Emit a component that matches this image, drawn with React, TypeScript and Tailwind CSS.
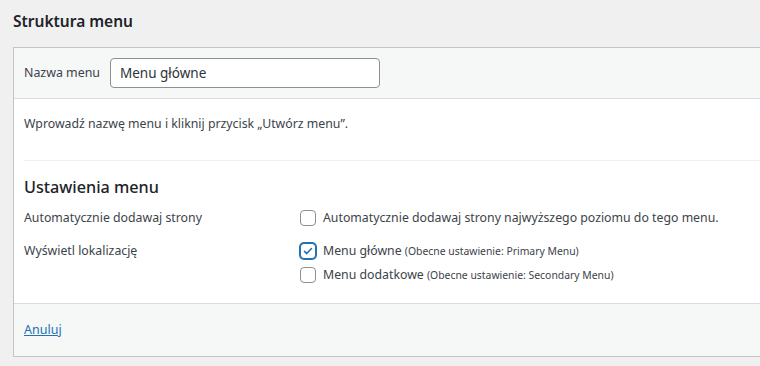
export default function App() {
  const font = { fontFamily: '"Noto Sans", "Open Sans", sans-serif' };
  return (
    <div className="h-[366px] w-[760px] overflow-hidden bg-[#f0f0f1] text-[#3c434a]" style={font}>
      <h2 className="pl-[13px] pt-[9px] text-[15.5px] font-semibold leading-[24px] text-[#1d2327]">
        Struktura menu
      </h2>
      <div className="ml-[13px] mt-[14px] w-[800px] border border-[#c3c4c7] bg-white">
        <div className="flex h-[51px] items-center gap-[10px] border-b border-[#dcdcde] bg-[#f6f7f7] pl-[10px]">
          <span className="text-[12.4px]">Nazwa menu</span>
          <input
            defaultValue="Menu główne"
            className="h-[30px] w-[270px] rounded-[4px] border border-[#8c8f94] bg-white px-[9px] text-[13.5px] text-[#2c3338] outline-none"
          />
        </div>
        <div className="px-[10px]">
          <p className="pb-[26px] pt-[15px] text-[12.3px] leading-[20px]">
            Wprowadź nazwę menu i kliknij przycisk „Utwórz menu”.
          </p>
          <div className="border-t border-[#f0f0f1] pt-[14px] pb-[19px]">
            <h3 className="text-[16.2px] font-medium leading-[24px] text-[#1d2327]">Ustawienia menu</h3>
            <div className="mt-[10px] grid grid-cols-[276px_1fr] gap-y-[12px] text-[12.3px] leading-[18px]">
              <div>Automatycznie dodawaj strony</div>
              <label className="flex items-center gap-[7px]">
                <Box />
                <span>Automatycznie dodawaj strony najwyższego poziomu do tego menu.</span>
              </label>
              <div className="pt-[3px]">Wyświetl lokalizację</div>
              <div className="flex flex-col gap-[6px] pt-[3px]">
                <label className="flex items-center gap-[7px]">
                  <Box checked />
                  <span>
                    Menu główne <span className="text-[10.4px]">(Obecne ustawienie: Primary Menu)</span>
                  </span>
                </label>
                <label className="flex items-center gap-[7px]">
                  <Box />
                  <span>
                    Menu dodatkowe <span className="text-[10.4px]">(Obecne ustawienie: Secondary Menu)</span>
                  </span>
                </label>
              </div>
            </div>
          </div>
        </div>
        <div className="flex h-[53px] items-center border-t border-[#dcdcde] bg-[#f6f7f7] pl-[10px]">
          <a href="#" className="text-[12.5px] text-[#2271b1] underline">
            Anuluj
          </a>
        </div>
      </div>
    </div>
  );
}

function Box({ checked = false }: { checked?: boolean }) {
  return (
    <span
      className={`flex h-[16px] w-[16px] shrink-0 items-center justify-center rounded-[4px] border bg-white ${
        checked ? "border-[#2271b1] shadow-[0_0_0_1px_#2271b1]" : "border-[#8c8f94]"
      }`}
    >
      {checked ? (
        <svg viewBox="0 0 20 20" className="h-[18px] w-[18px]">
          <path d="M5 10.5l3.2 3.2L15 6.5" fill="none" stroke="#2271b1" strokeWidth="2.2" strokeLinecap="round" strokeLinejoin="round" />
        </svg>
      ) : null}
    </span>
  );
}
